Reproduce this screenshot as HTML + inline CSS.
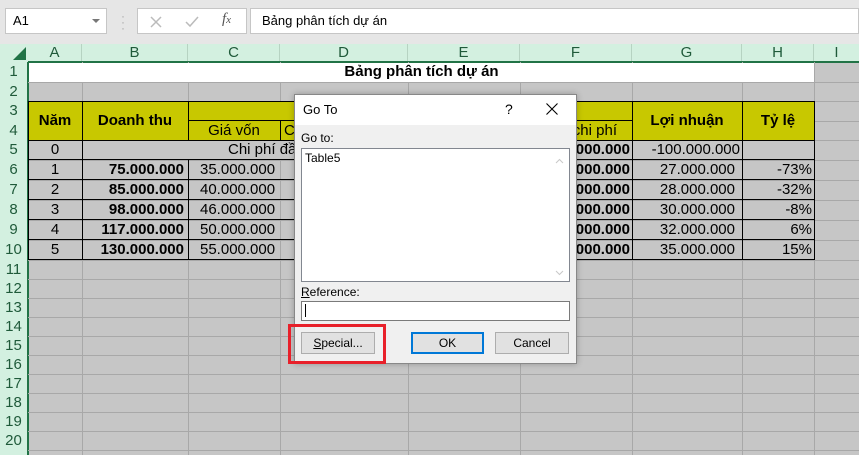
<!DOCTYPE html>
<html><head><meta charset="utf-8"><style>
*{margin:0;padding:0;box-sizing:border-box}
body{width:859px;height:455px;overflow:hidden;background:#e6e6e6;font-family:"Liberation Sans",Arial,sans-serif;position:relative}
.a{position:absolute}
.v{position:absolute;top:62px;height:393px;width:1px;background:#a8a8a8}
.h{position:absolute;left:28px;width:831px;height:1px;background:#a8a8a8}
.c{position:absolute;font-size:15px;color:#000;white-space:nowrap;height:20px;line-height:20px}
.b{font-weight:bold}
.r{text-align:right}
.m{text-align:center}
.rh{position:absolute;left:0;width:27px;text-align:center;font-size:15px;color:#1f5a3a;line-height:19px}
.ch{position:absolute;top:44px;height:18px;line-height:18px;text-align:center;font-size:15px;color:#1f5a3a;border-right:1px solid #b6d3c2}
.btn{position:absolute;height:22px;background:#e1e1e1;border:1px solid #adadad;font-size:12px;text-align:center;line-height:20px;color:#000}
</style></head><body>
<div class="a" style="left:5px;top:8px;width:102px;height:26px;background:#fff;border:1px solid #c6c6c6;font-size:13px;line-height:24px;padding-left:7px">A1</div>
<div class="a" style="left:92px;top:19px;width:0;height:0;border-left:4px solid transparent;border-right:4px solid transparent;border-top:4px solid #777"></div>
<div class="a" style="left:121px;top:13px;color:#aaa;font-size:12px;line-height:6px">·<br>·<br>·</div>
<div class="a" style="left:137px;top:8px;width:110px;height:26px;background:#fff;border:1px solid #c6c6c6"></div>
<svg class="a" style="left:150px;top:16px" width="12" height="12"><path d="M1 1L11 11M11 1L1 11" stroke="#bbb" stroke-width="1.5"/></svg>
<svg class="a" style="left:185px;top:15px" width="14" height="13"><path d="M1 7L5 11L13 2" stroke="#bbb" stroke-width="1.5" fill="none"/></svg>
<div class="a" style="left:222px;top:11px;color:#555;font-size:15px;font-style:italic;font-family:'Liberation Serif',serif">f<span style="font-size:11px">x</span></div>
<div class="a" style="left:250px;top:8px;width:609px;height:26px;background:#fff;border:1px solid #c6c6c6;font-size:13px;line-height:24px;padding-left:11px">Bảng phân tích dự án</div>
<div class="a" style="left:0;top:44px;width:859px;height:18px;background:#d3f0e0"></div>
<div class="a" style="left:0;top:44px;width:28px;height:411px;background:#d3f0e0"></div>
<div class="a" style="left:13px;top:47px;width:0;height:0;border-left:13px solid transparent;border-bottom:13px solid #217346"></div>
<div class="ch" style="left:28px;width:54px">A</div>
<div class="ch" style="left:82px;width:106px">B</div>
<div class="ch" style="left:188px;width:92px">C</div>
<div class="ch" style="left:280px;width:128px">D</div>
<div class="ch" style="left:408px;width:112px">E</div>
<div class="ch" style="left:520px;width:112px">F</div>
<div class="ch" style="left:632px;width:110px">G</div>
<div class="ch" style="left:742px;width:72px">H</div>
<div class="ch" style="left:814px;width:45px;border:0">I</div>
<div class="a" style="left:28px;top:61px;width:831px;height:2px;background:#217346"></div>
<div class="a" style="left:27px;top:62px;width:2px;height:393px;background:#217346"></div>
<div class="rh" style="top:62px;height:20px;line-height:20px">1</div>
<div class="rh" style="top:82px;height:19px">2</div>
<div class="rh" style="top:101px;height:20px;line-height:20px">3</div>
<div class="rh" style="top:121px;height:19px">4</div>
<div class="rh" style="top:140px;height:20px;line-height:20px">5</div>
<div class="rh" style="top:160px;height:20px;line-height:20px">6</div>
<div class="rh" style="top:180px;height:20px;line-height:20px">7</div>
<div class="rh" style="top:200px;height:20px;line-height:20px">8</div>
<div class="rh" style="top:220px;height:20px;line-height:20px">9</div>
<div class="rh" style="top:240px;height:20px;line-height:20px">10</div>
<div class="rh" style="top:260px">11</div>
<div class="rh" style="top:279px">12</div>
<div class="rh" style="top:298px">13</div>
<div class="rh" style="top:317px">14</div>
<div class="rh" style="top:336px">15</div>
<div class="rh" style="top:355px">16</div>
<div class="rh" style="top:374px">17</div>
<div class="rh" style="top:393px">18</div>
<div class="rh" style="top:412px">19</div>
<div class="rh" style="top:431px">20</div>
<div class="a" style="left:29px;top:63px;width:830px;height:392px;background:#c6c6c6"></div>
<div class="v" style="left:82px"></div><div class="v" style="left:188px"></div><div class="v" style="left:280px"></div><div class="v" style="left:408px"></div><div class="v" style="left:520px"></div><div class="v" style="left:632px"></div><div class="v" style="left:742px"></div><div class="v" style="left:814px"></div>
<div class="h" style="top:82px"></div><div class="h" style="top:101px"></div><div class="h" style="top:121px"></div><div class="h" style="top:140px"></div><div class="h" style="top:160px"></div><div class="h" style="top:180px"></div><div class="h" style="top:200px"></div><div class="h" style="top:220px"></div><div class="h" style="top:240px"></div><div class="h" style="top:260px"></div><div class="h" style="top:279px"></div><div class="h" style="top:298px"></div><div class="h" style="top:317px"></div><div class="h" style="top:336px"></div><div class="h" style="top:355px"></div><div class="h" style="top:374px"></div><div class="h" style="top:393px"></div><div class="h" style="top:412px"></div><div class="h" style="top:431px"></div><div class="h" style="top:450px"></div>
<div class="a" style="left:29px;top:63px;width:785px;height:19px;background:#fff"></div>
<div class="c b m" style="left:29px;top:62px;width:785px">Bảng phân tích dự án</div>
<div class="a" style="left:28px;top:101px;width:787px;height:40px;background:#c8c800;border:1px solid #000"></div>
<div class="a" style="left:82px;top:101px;width:1px;height:159px;background:#000"></div>
<div class="a" style="left:188px;top:101px;width:1px;height:40px;background:#000"></div>
<div class="a" style="left:188px;top:160px;width:1px;height:100px;background:#000"></div>
<div class="a" style="left:280px;top:121px;width:1px;height:19px;background:#000"></div>
<div class="a" style="left:632px;top:101px;width:1px;height:159px;background:#000"></div>
<div class="a" style="left:742px;top:101px;width:1px;height:159px;background:#000"></div>
<div class="a" style="left:188px;top:120px;width:444px;height:1px;background:#000"></div>
<div class="a" style="left:28px;top:140px;width:1px;height:120px;background:#000"></div>
<div class="a" style="left:814px;top:140px;width:1px;height:120px;background:#000"></div>
<div class="a" style="left:28px;top:159px;width:787px;height:1px;background:#000"></div>
<div class="a" style="left:28px;top:179px;width:787px;height:1px;background:#000"></div>
<div class="a" style="left:28px;top:199px;width:787px;height:1px;background:#000"></div>
<div class="a" style="left:28px;top:219px;width:787px;height:1px;background:#000"></div>
<div class="a" style="left:28px;top:239px;width:787px;height:1px;background:#000"></div>
<div class="a" style="left:28px;top:259px;width:787px;height:1px;background:#000"></div>
<div class="c b m" style="left:28px;top:111px;width:54px">Năm</div>
<div class="c b m" style="left:82px;top:111px;width:106px">Doanh thu</div>
<div class="c m" style="left:188px;top:121px;width:92px">Giá vốn</div>
<div class="c" style="left:284px;top:121px">Chi phí</div>
<div class="c r" style="left:500px;top:121px;width:117px">Tổng chi phí</div>
<div class="c b m" style="left:632px;top:111px;width:110px">Lợi nhuận</div>
<div class="c b m" style="left:742px;top:111px;width:72px">Tỷ lệ</div>
<div class="a" style="left:83px;top:141px;width:437px;height:18px;background:#c6c6c6"></div>
<div class="c m" style="left:28px;top:140px;width:54px">0</div>
<div class="c" style="left:228px;top:140px">Chi phí đầu tư</div>
<div class="c b r" style="left:520px;top:140px;width:110px">-100.000.000</div>
<div class="c r" style="left:632px;top:140px;width:108px">-100.000.000</div>
<div class="c m" style="left:28px;top:160px;width:54px">1</div><div class="c b r" style="left:82px;top:160px;width:102px">75.000.000</div><div class="c" style="left:200px;top:160px">35.000.000</div><div class="c b r" style="left:520px;top:160px;width:110px">108.000.000</div><div class="c r" style="left:632px;top:160px;width:103px">27.000.000</div><div class="c r" style="left:742px;top:160px;width:70px">-73%</div>
<div class="c m" style="left:28px;top:180px;width:54px">2</div><div class="c b r" style="left:82px;top:180px;width:102px">85.000.000</div><div class="c" style="left:200px;top:180px">40.000.000</div><div class="c b r" style="left:520px;top:180px;width:110px">57.000.000</div><div class="c r" style="left:632px;top:180px;width:103px">28.000.000</div><div class="c r" style="left:742px;top:180px;width:70px">-32%</div>
<div class="c m" style="left:28px;top:200px;width:54px">3</div><div class="c b r" style="left:82px;top:200px;width:102px">98.000.000</div><div class="c" style="left:200px;top:200px">46.000.000</div><div class="c b r" style="left:520px;top:200px;width:110px">68.000.000</div><div class="c r" style="left:632px;top:200px;width:103px">30.000.000</div><div class="c r" style="left:742px;top:200px;width:70px">-8%</div>
<div class="c m" style="left:28px;top:220px;width:54px">4</div><div class="c b r" style="left:82px;top:220px;width:102px">117.000.000</div><div class="c" style="left:200px;top:220px">50.000.000</div><div class="c b r" style="left:520px;top:220px;width:110px">85.000.000</div><div class="c r" style="left:632px;top:220px;width:103px">32.000.000</div><div class="c r" style="left:742px;top:220px;width:70px">6%</div>
<div class="c m" style="left:28px;top:240px;width:54px">5</div><div class="c b r" style="left:82px;top:240px;width:102px">130.000.000</div><div class="c" style="left:200px;top:240px">55.000.000</div><div class="c b r" style="left:520px;top:240px;width:110px">95.000.000</div><div class="c r" style="left:632px;top:240px;width:103px">35.000.000</div><div class="c r" style="left:742px;top:240px;width:70px">15%</div>
<div class="a" style="left:294px;top:94px;width:283px;height:270px;background:#f0f0f0;border:1px solid #888;box-shadow:0 0 6px rgba(0,0,0,.25)"></div>
<div class="a" style="left:295px;top:95px;width:281px;height:30px;background:#fff"></div>
<div class="a" style="left:303px;top:102px;font-size:13px">Go To</div>
<div class="a" style="left:505px;top:101px;font-size:14px">?</div>
<svg class="a" style="left:546px;top:103px" width="12" height="12"><path d="M0.5 0.5L11.5 11.5M11.5 0.5L0.5 11.5" stroke="#000" stroke-width="1.1"/></svg>
<div class="a" style="left:301px;top:131px;font-size:12px">Go to:</div>
<div class="a" style="left:301px;top:148px;width:269px;height:134px;background:#fff;border:1px solid #828790"></div>
<div class="a" style="left:305px;top:151px;font-size:12px">Table5</div>
<svg class="a" style="left:555px;top:158px" width="9" height="6"><path d="M1 5L4.5 1.5L8 5" stroke="#c8c8c8" fill="none"/></svg>
<svg class="a" style="left:555px;top:270px" width="9" height="6"><path d="M1 1L4.5 4.5L8 1" stroke="#c8c8c8" fill="none"/></svg>
<div class="a" style="left:301px;top:285px;font-size:12px"><u>R</u>eference:</div>
<div class="a" style="left:301px;top:301px;width:269px;height:20px;background:#fff;border:1px solid #7a7a7a"></div>
<div class="a" style="left:305px;top:304px;width:1px;height:13px;background:#000"></div>
<div class="btn" style="left:301px;top:332px;width:74px"><u>S</u>pecial...</div>
<div class="btn" style="left:411px;top:332px;width:73px;border:2px solid #0078d7;line-height:18px">OK</div>
<div class="btn" style="left:495px;top:332px;width:74px">Cancel</div>
<div class="a" style="left:288px;top:324px;width:98px;height:40px;border:3px solid #e8202a"></div>
</body></html>
